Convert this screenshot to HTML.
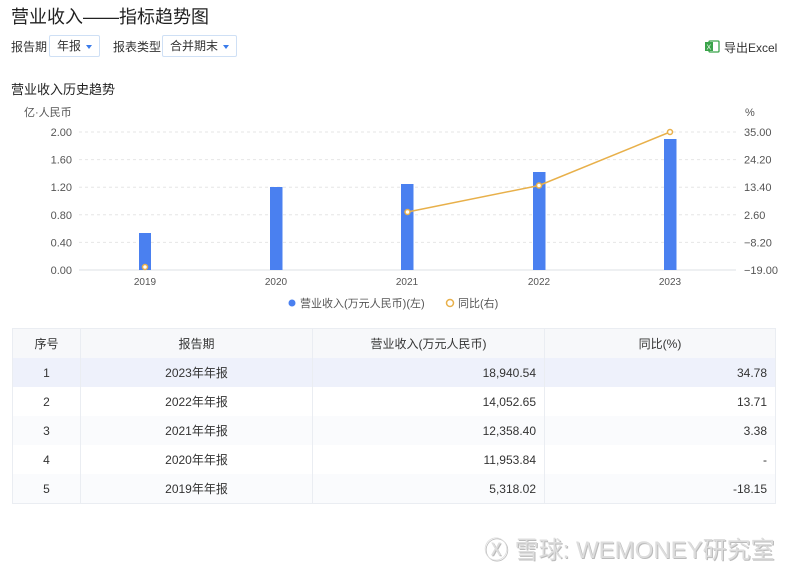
<!DOCTYPE html>
<html><head><meta charset="utf-8"><style>
body{margin:0;width:800px;height:572px;background:#fff;font-family:"Liberation Sans","Noto Sans CJK SC",sans-serif;color:#333;position:relative;overflow:hidden}
.a{position:absolute;white-space:nowrap}
.sel{position:absolute;border:1px solid #cfe0f5;border-radius:2px;font-size:12px;line-height:20px;padding:0 7px;box-sizing:border-box;height:22px;white-space:nowrap}
.tri{display:inline-block;width:0;height:0;border-left:3.5px solid transparent;border-right:3.5px solid transparent;border-top:4px solid #3a7bea;vertical-align:middle;margin-left:5px}
table{position:absolute;left:12px;top:328px;width:764px;border-collapse:collapse;font-size:12px;border:1px solid #eaedf2}
td{height:29px;text-align:center;padding:0 8px;border-left:1px solid #eaedf2}
td.r{text-align:right}
tr.h td{background:#f7f8fa}
tr.s td{background:#eef1fb}
tr.e td{background:#fafbfd}
</style></head><body>
<div class="a" style="left:11px;top:3px;font-size:18px;color:#222">营业收入——指标趋势图</div>
<div class="a" style="left:11px;top:38px;font-size:12px">报告期</div>
<div class="sel" style="left:49px;top:35px">年报<span class="tri"></span></div>
<div class="a" style="left:113px;top:38px;font-size:12px">报表类型</div>
<div class="sel" style="left:162px;top:35px">合并期末<span class="tri"></span></div>
<svg class="a" style="left:705px;top:40px" width="15" height="13"><rect x="4" y="1" width="10" height="11" rx="1" fill="none" stroke="#3aa34a" stroke-width="1.3"/><rect x="0" y="2" width="8" height="9" fill="#3aa34a"/><text x="1.5" y="9.5" font-size="7" fill="#fff" font-family="Liberation Sans">X</text></svg>
<div class="a" style="left:724px;top:39px;font-size:12px">导出Excel</div>
<div class="a" style="left:11px;top:79px;font-size:13px;color:#222">营业收入历史趋势</div>
<svg class="a" style="left:0;top:100px" width="800" height="215" font-family="Liberation Sans,Noto Sans CJK SC,sans-serif" font-size="11" fill="#555">
<text x="24" y="16" font-size="11">亿·人民币</text>
<text x="745" y="16">%</text>
<g stroke="#e6e6e6" stroke-dasharray="3,3">
<line x1="79" y1="32" x2="736" y2="32"/><line x1="79" y1="59.6" x2="736" y2="59.6"/><line x1="79" y1="87.2" x2="736" y2="87.2"/><line x1="79" y1="114.8" x2="736" y2="114.8"/><line x1="79" y1="142.4" x2="736" y2="142.4"/></g>
<line x1="79" y1="170" x2="736" y2="170" stroke="#dde0e6"/>
<g text-anchor="end"><text x="72" y="36">2.00</text><text x="72" y="63.6">1.60</text><text x="72" y="91.2">1.20</text><text x="72" y="118.8">0.80</text><text x="72" y="146.4">0.40</text><text x="72" y="174">0.00</text></g>
<g><text x="744" y="36">35.00</text><text x="744" y="63.6">24.20</text><text x="744" y="91.2">13.40</text><text x="744" y="118.8">2.60</text><text x="744" y="146.4">−8.20</text><text x="744" y="174">−19.00</text></g>
<g fill="#4a80f0"><rect x="139" y="133" width="12" height="37"/><rect x="270" y="87" width="12.5" height="83"/><rect x="401" y="84" width="12.5" height="86"/><rect x="533" y="72" width="12.5" height="98"/><rect x="664" y="39" width="12.5" height="131"/></g>
<polyline points="407.5,112 539,85.5 670,32" fill="none" stroke="#e8b04a" stroke-width="1.5"/>
<g fill="#fff" stroke="#e8b04a" stroke-width="1.5"><circle cx="145" cy="167" r="2.5"/><circle cx="407.5" cy="112" r="2.5"/><circle cx="539" cy="85.5" r="2.5"/><circle cx="670" cy="32" r="2.5"/></g>
<g text-anchor="middle" font-size="10"><text x="145" y="185">2019</text><text x="276" y="185">2020</text><text x="407" y="185">2021</text><text x="539" y="185">2022</text><text x="670" y="185">2023</text></g>
<circle cx="292" cy="203" r="3.5" fill="#4a80f0"/><text x="300" y="207">营业收入(万元人民币)(左)</text>
<circle cx="450" cy="203" r="3.5" fill="#fff" stroke="#e8b04a" stroke-width="1.5"/><text x="458" y="207">同比(右)</text>
</svg>
<table>
<tr class="h"><td style="width:51px">序号</td><td style="width:215px">报告期</td><td style="width:215px">营业收入(万元人民币)</td><td>同比(%)</td></tr>
<tr class="s"><td>1</td><td>2023年年报</td><td class="r">18,940.54</td><td class="r">34.78</td></tr>
<tr><td>2</td><td>2022年年报</td><td class="r">14,052.65</td><td class="r">13.71</td></tr>
<tr class="e"><td>3</td><td>2021年年报</td><td class="r">12,358.40</td><td class="r">3.38</td></tr>
<tr><td>4</td><td>2020年年报</td><td class="r">11,953.84</td><td class="r">-</td></tr>
<tr class="e"><td>5</td><td>2019年年报</td><td class="r">5,318.02</td><td class="r">-18.15</td></tr>
</table>
<div class="a" style="left:484px;top:530px;font-size:24px;color:#ddd;text-shadow:1px 1px 0 #bbb">Ⓧ 雪球: WEMONEY研究室</div>
</body></html>
